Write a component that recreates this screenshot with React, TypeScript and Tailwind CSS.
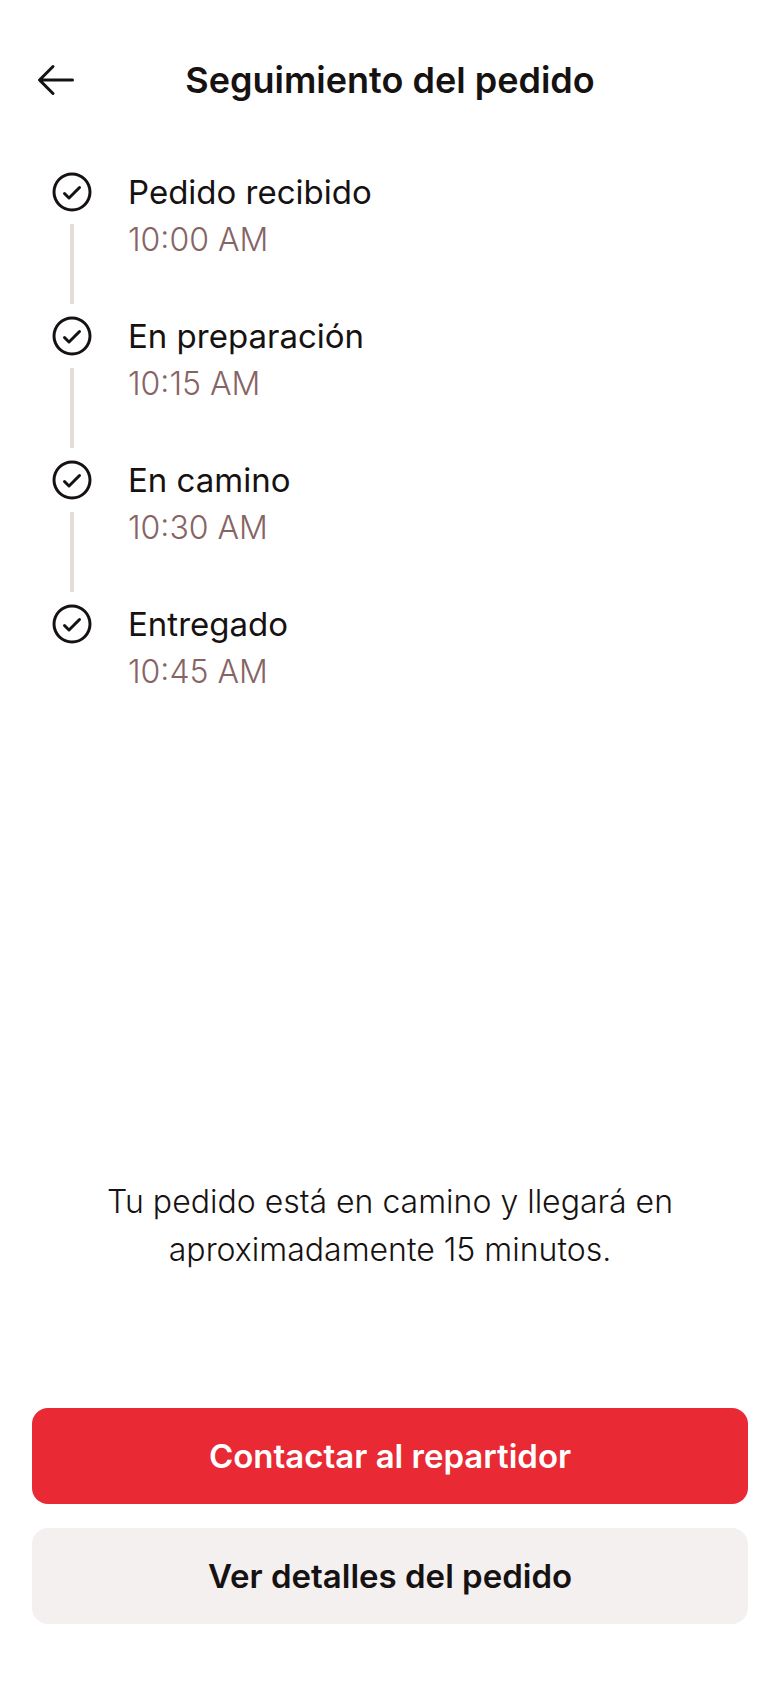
import { PiArrowLeft, PiCheckCircle } from "react-icons/pi";

type Step = { title: string; time: string };

const steps: Step[] = [
  { title: "Pedido recibido", time: "10:00 AM" },
  { title: "En preparación", time: "10:15 AM" },
  { title: "En camino", time: "10:30 AM" },
  { title: "Entregado", time: "10:45 AM" },
];

function Header() {
  return (
    <header className="flex items-center px-8 pt-8 pb-4">
      <button type="button" aria-label="Volver" className="flex size-24 shrink-0 items-center">
        <PiArrowLeft className="size-12" />
      </button>
      <h1 className="flex-1 pr-24 text-center text-[36px] leading-[48px] font-semibold">
        Seguimiento del pedido
      </h1>
    </header>
  );
}

function Timeline() {
  return (
    <ol className="px-8 pt-6">
      {steps.map((step, index) => (
        <li key={step.title} className="flex gap-4">
          <div className="flex w-20 shrink-0 flex-col items-center gap-2">
            <PiCheckCircle className="size-12" />
            {index < steps.length - 1 && <span className="mb-2 h-20 w-1 bg-[#e5dcdc]" />}
          </div>
          <div className="flex-1 leading-[48px]">
            <p className="text-[33px]">{step.title}</p>
            <p className="text-[32px] font-light text-[#876464]">{step.time}</p>
          </div>
        </li>
      ))}
    </ol>
  );
}

function Actions() {
  return (
    <div className="flex flex-col gap-6 px-8 pb-16">
      <button type="button" className="h-24 rounded-2xl bg-[#e92933] px-10 text-[33px] leading-[48px] font-semibold text-white">
        Contactar al repartidor
      </button>
      <button type="button" className="h-24 rounded-2xl bg-[#f4f0f0] px-10 text-[33px] leading-[48px] font-semibold">
        Ver detalles del pedido
      </button>
    </div>
  );
}

export default function App() {
  return (
    <div className="flex min-h-screen flex-col justify-between bg-white font-['Inter',sans-serif] text-[#171212]">
      <main>
        <Header />
        <Timeline />
      </main>
      <footer>
        <p className="mx-auto max-w-[640px] px-8 pb-[134px] text-center text-[32px] leading-[48px] font-light">
          Tu pedido está en camino y llegará en aproximadamente 15 minutos.
        </p>
        <Actions />
      </footer>
    </div>
  );
}
